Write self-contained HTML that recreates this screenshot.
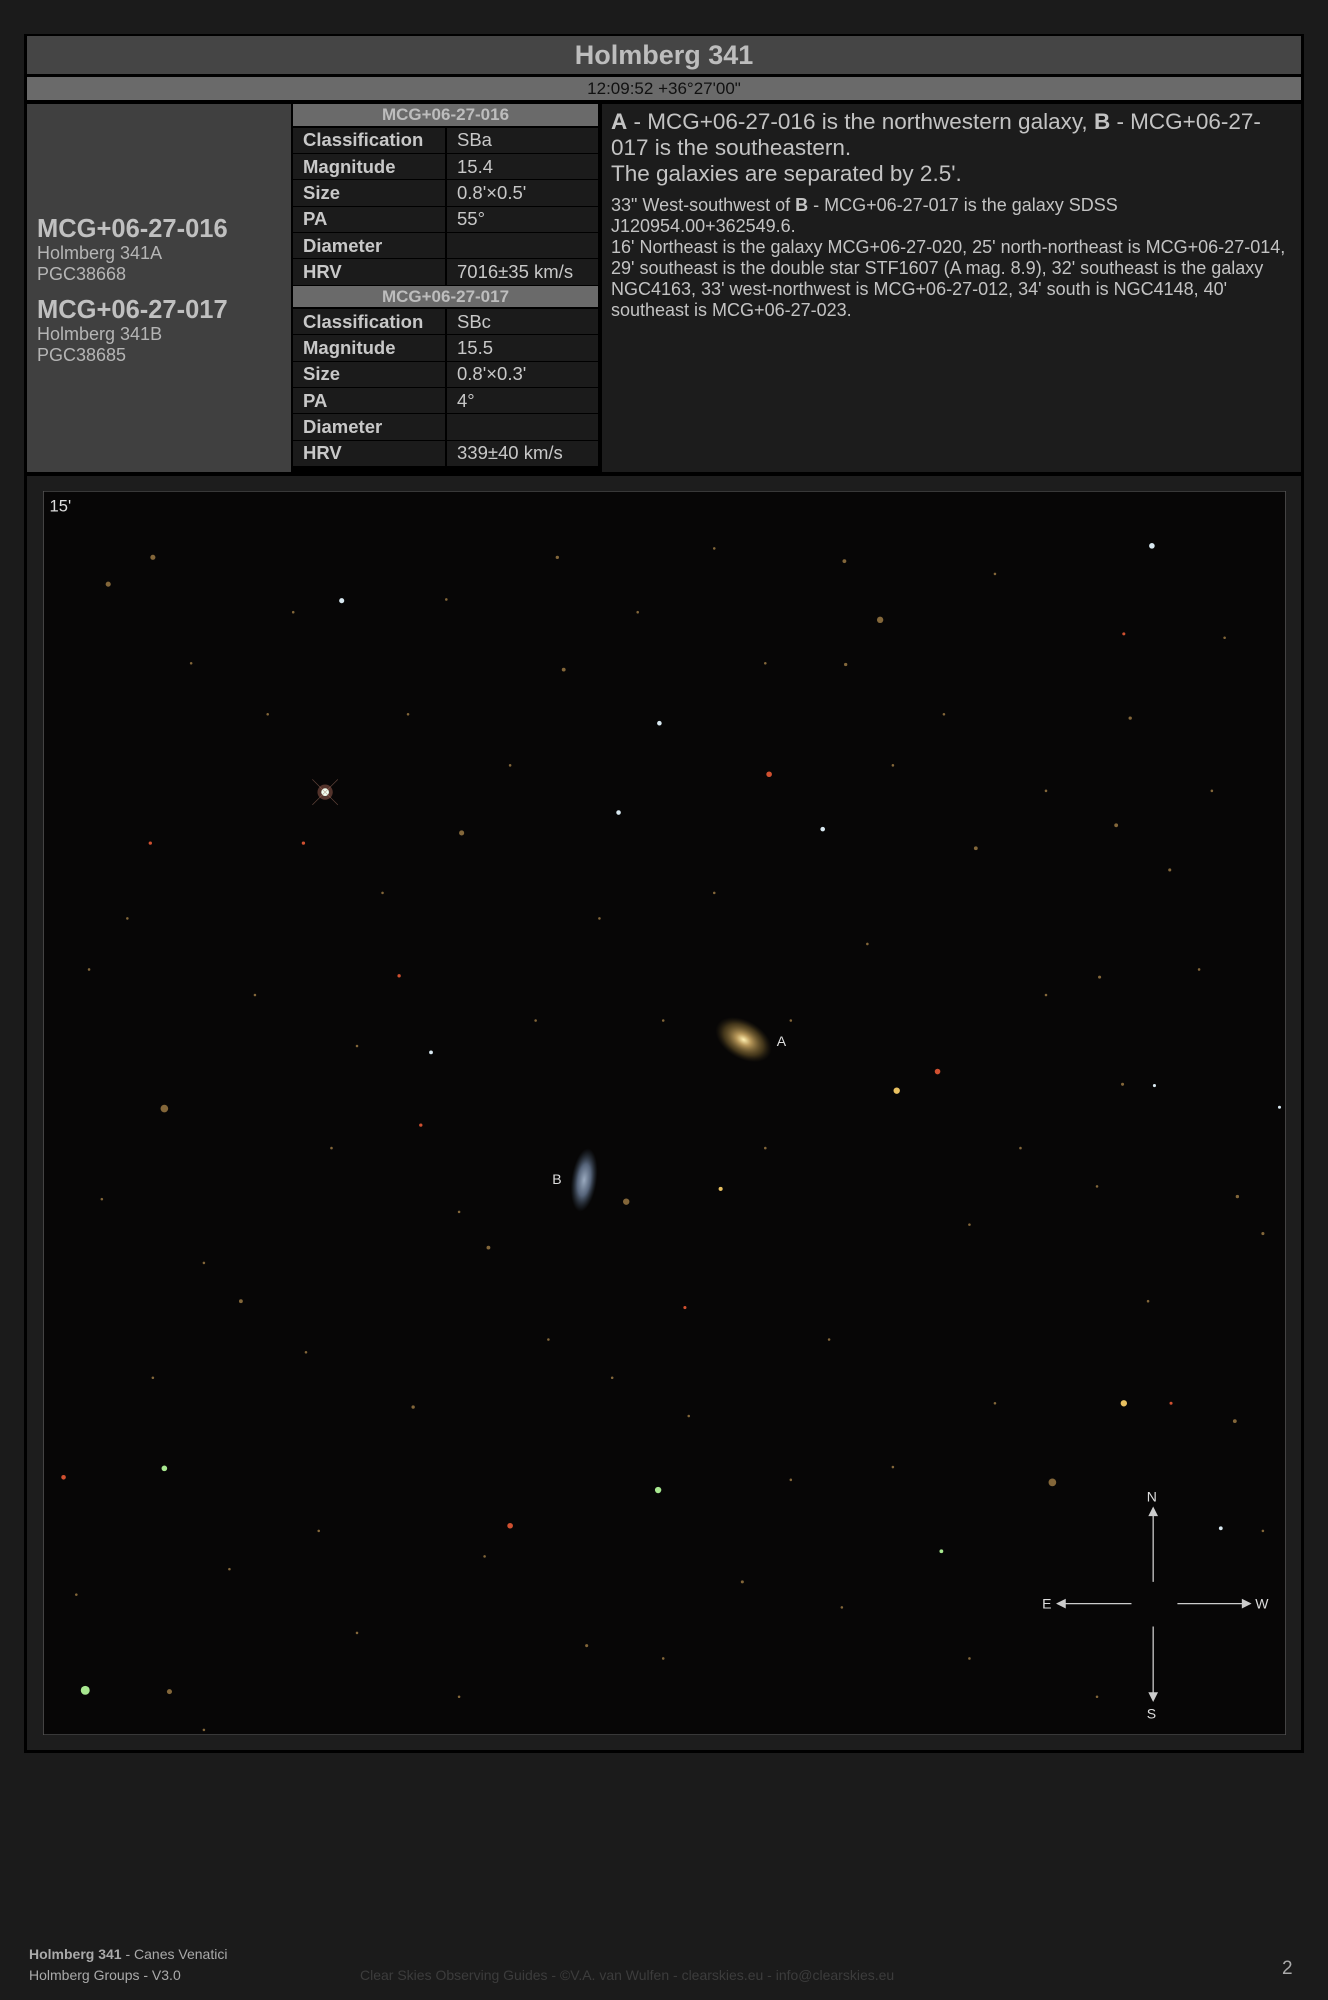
<!DOCTYPE html>
<html><head><meta charset="utf-8"><style>
*{margin:0;padding:0;box-sizing:border-box}
body{width:1328px;height:2000px;background:#1b1b1b;font-family:"Liberation Sans",sans-serif;position:relative;overflow:hidden}
.abs{position:absolute}
#outer{left:24px;top:34px;width:1280px;height:1719px;background:#000}
#title{left:27px;top:36px;width:1274px;height:38px;background:#454545;color:#bdbdbd;font-weight:bold;font-size:27px;text-align:center;line-height:38px}
#coord{left:27px;top:77px;width:1274px;height:23px;background:#6a6a6a;color:#111;font-size:17px;text-align:center;line-height:24px}
#left{left:27px;top:104px;width:264px;height:368px;background:#404040;color:#b5b5b5}
#left .n{font-weight:bold;font-size:25.5px;color:#c0c0c0;padding-left:10px;line-height:28px}
#left .s{font-size:18px;padding-left:10px;line-height:21px}
table{position:absolute;left:293px;width:305px;border-collapse:collapse;font-size:18.5px}
td{height:26.4px;background:#1b1b1b;color:#c8c8c8;border-bottom:1px solid #000;padding-left:10px}
td.k{font-weight:bold;width:153px;border-right:2px solid #000}
th{height:23px;background:#6a6a6a;color:#bdbdbd;font-size:17px;font-weight:bold;border-bottom:2px solid #000}
#txt{left:602px;top:104px;width:699px;height:368px;background:#1c1c1c}
#imgbg{left:27px;top:476px;width:1274px;height:1274px;background:#1d1d1d}
.f{font-size:14px;color:#aaa}
</style></head><body>
<div id="outer" class="abs"></div>
<div id="title" class="abs">Holmberg 341</div>
<div id="coord" class="abs">12:09:52 +36°27'00"</div>
<div id="left" class="abs"><div style="height:111px"></div>
<div class="n">MCG+06-27-016</div><div class="s">Holmberg 341A</div><div class="s">PGC38668</div>
<div style="height:11px"></div>
<div class="n">MCG+06-27-017</div><div class="s">Holmberg 341B</div><div class="s">PGC38685</div></div>
<table style="top:104px">
<tr><th colspan="2">MCG+06-27-016</th></tr>
<tr><td class="k">Classification</td><td>SBa</td></tr>
<tr><td class="k">Magnitude</td><td>15.4</td></tr>
<tr><td class="k">Size</td><td>0.8'×0.5'</td></tr>
<tr><td class="k">PA</td><td>55°</td></tr>
<tr><td class="k">Diameter</td><td></td></tr>
<tr><td class="k">HRV</td><td>7016±35 km/s</td></tr>
<tr><th colspan="2">MCG+06-27-017</th></tr>
<tr><td class="k">Classification</td><td>SBc</td></tr>
<tr><td class="k">Magnitude</td><td>15.5</td></tr>
<tr><td class="k">Size</td><td>0.8'×0.3'</td></tr>
<tr><td class="k">PA</td><td>4°</td></tr>
<tr><td class="k">Diameter</td><td></td></tr>
<tr><td class="k">HRV</td><td>339±40 km/s</td></tr>
</table>
<div id="txt" class="abs"></div>
<div class="abs" style="left:611px;top:109px;width:676px;color:#c3c3c3">
<div style="font-size:22.5px;line-height:26px"><b>A</b> - MCG+06-27-016 is the northwestern galaxy, <b>B</b> - MCG+06-27-017 is the southeastern.<br>The galaxies are separated by 2.5'.</div>
<div style="font-size:18px;line-height:21px;margin-top:8px">33" West-southwest of <b>B</b> - MCG+06-27-017 is the galaxy SDSS J120954.00+362549.6.<br>16' Northeast is the galaxy MCG+06-27-020, 25' north-northeast is MCG+06-27-014, 29' southeast is the double star STF1607 (A mag. 8.9), 32' southeast is the galaxy NGC4163, 33' west-northwest is MCG+06-27-012, 34' south is NGC4148, 40' southeast is MCG+06-27-023.</div></div>
<div id="imgbg" class="abs"></div>
<svg class="abs" style="left:43px;top:491px" width="1243" height="1244" viewBox="34 385 974 975">
<defs><radialGradient id="ga"><stop offset="0" stop-color="#fff0b0"/><stop offset="0.25" stop-color="#b8985a"/><stop offset="0.7" stop-color="#6b5628" stop-opacity="0.6"/><stop offset="1" stop-color="#3b3018" stop-opacity="0"/></radialGradient>
<radialGradient id="gb"><stop offset="0" stop-color="#9aaabf"/><stop offset="0.5" stop-color="#56647a"/><stop offset="1" stop-color="#33404f" stop-opacity="0"/></radialGradient></defs>
<rect x="34" y="385" width="974" height="975" fill="#070606" stroke="#555" stroke-width="1"/>
<g fill="#b89050" opacity="0.7">
<circle cx="120" cy="437" r="2"/><circle cx="442" cy="525" r="1.5"/><circle cx="663" cy="521" r="1.3"/><circle cx="886" cy="563" r="1.3"/><circle cx="875" cy="647" r="1.5"/><circle cx="917" cy="682" r="1.2"/><circle cx="862" cy="766" r="1.2"/><circle cx="970" cy="938" r="1.3"/><circle cx="990" cy="967" r="1.2"/><circle cx="362" cy="653" r="2"/><circle cx="491" cy="942" r="2.5"/><circle cx="383" cy="978" r="1.5"/><circle cx="189" cy="1020" r="1.5"/><circle cx="324" cy="1103" r="1.3"/><circle cx="968" cy="1114" r="1.5"/><circle cx="160" cy="1356" r="1"/><circle cx="133" cy="1326" r="2"/><circle cx="437" cy="437" r="1.3"/><circle cx="85" cy="458" r="2"/><circle cx="765" cy="665" r="1.5"/><circle cx="582" cy="1240" r="1.2"/><circle cx="690" cy="486" r="2.5"/><circle cx="662" cy="440" r="1.5"/><circle cx="129" cy="869" r="3"/><circle cx="825" cy="1162" r="3"/><circle cx="300" cy="700" r="1"/><circle cx="420" cy="800" r="1"/><circle cx="210" cy="560" r="1"/><circle cx="560" cy="700" r="1"/><circle cx="700" cy="600" r="1"/><circle cx="800" cy="900" r="1"/><circle cx="650" cy="1050" r="1"/><circle cx="250" cy="1200" r="1"/><circle cx="460" cy="1290" r="1.2"/><circle cx="760" cy="1300" r="1"/><circle cx="900" cy="1020" r="1"/><circle cx="350" cy="470" r="1"/><circle cx="560" cy="430" r="1"/><circle cx="780" cy="450" r="1"/><circle cx="960" cy="500" r="1"/><circle cx="70" cy="760" r="1"/><circle cx="160" cy="990" r="1"/><circle cx="540" cy="1110" r="1"/><circle cx="700" cy="1150" r="1"/><circle cx="620" cy="800" r="1"/><circle cx="880" cy="850" r="1.2"/><circle cx="430" cy="1050" r="1"/><circle cx="280" cy="1280" r="1"/><circle cx="860" cy="1330" r="1"/><circle cx="990" cy="1200" r="1"/>
<circle cx="150" cy="520" r="1"/><circle cx="230" cy="480" r="1"/><circle cx="320" cy="560" r="1"/><circle cx="400" cy="600" r="1"/><circle cx="500" cy="480" r="1"/><circle cx="600" cy="520" r="1"/><circle cx="740" cy="560" r="1"/><circle cx="820" cy="620" r="1"/><circle cx="950" cy="620" r="1"/><circle cx="100" cy="720" r="1"/><circle cx="200" cy="780" r="1"/><circle cx="280" cy="820" r="1"/><circle cx="470" cy="720" r="1"/><circle cx="520" cy="800" r="1"/><circle cx="680" cy="740" r="1"/><circle cx="820" cy="780" r="1"/><circle cx="940" cy="760" r="1"/><circle cx="80" cy="940" r="1"/><circle cx="260" cy="900" r="1"/><circle cx="360" cy="950" r="1"/><circle cx="600" cy="900" r="1"/><circle cx="760" cy="960" r="1"/><circle cx="860" cy="930" r="1"/><circle cx="120" cy="1080" r="1"/><circle cx="240" cy="1060" r="1"/><circle cx="480" cy="1080" r="1"/><circle cx="620" cy="1160" r="1"/><circle cx="780" cy="1100" r="1"/><circle cx="60" cy="1250" r="1"/><circle cx="180" cy="1230" r="1"/><circle cx="380" cy="1220" r="1"/><circle cx="520" cy="1300" r="1"/><circle cx="660" cy="1260" r="1"/><circle cx="360" cy="1330" r="1"/></g>
<g fill="#d05030"><circle cx="603" cy="607" r="2.2"/><circle cx="735" cy="840" r="2.2"/><circle cx="330" cy="882" r="1.3"/><circle cx="313" cy="765" r="1.3"/><circle cx="118" cy="661" r="1.3"/><circle cx="238" cy="661" r="1.3"/><circle cx="400" cy="1196" r="2.2"/><circle cx="50" cy="1158" r="1.8"/><circle cx="537" cy="1025" r="1.2"/><circle cx="881" cy="497" r="1.2"/><circle cx="918" cy="1100" r="1.2"/></g>
<g fill="#e8c060"><circle cx="703" cy="855" r="2.5"/><circle cx="881" cy="1100" r="2.5"/><circle cx="565" cy="932" r="1.6"/></g>
<g fill="#d8e8f0"><circle cx="268" cy="471" r="2"/><circle cx="903" cy="428" r="2.2"/><circle cx="517" cy="567" r="1.8"/><circle cx="485" cy="637" r="1.8"/><circle cx="645" cy="650" r="1.8"/><circle cx="338" cy="825" r="1.5"/><circle cx="905" cy="851" r="1.2"/><circle cx="957" cy="1198" r="1.5"/><circle cx="1003" cy="868" r="1.2"/></g>
<g fill="#a8e890"><circle cx="129" cy="1151" r="2.2"/><circle cx="516" cy="1168" r="2.5"/><circle cx="67" cy="1325" r="3.5"/><circle cx="738" cy="1216" r="1.5"/></g>
<circle cx="255" cy="621" r="6" fill="#a06050" opacity="0.5"/><circle cx="255" cy="621" r="3" fill="#f0fff0"/>
<path d="M245 611L265 631M265 611L245 631" stroke="#a07060" stroke-width="0.5" opacity="0.6"/>
<ellipse cx="583" cy="815" rx="24" ry="15" fill="url(#ga)" transform="rotate(30 583 815)"/>
<ellipse cx="458" cy="925" rx="10" ry="25" fill="url(#gb)" transform="rotate(8 458 925)"/>
<g fill="#ddd" font-family="Liberation Sans,sans-serif" font-size="11"><text x="609" y="820">A</text><text x="433" y="928">B</text><text x="39" y="401" font-size="13">15'</text>
<text x="899" y="1177">N</text><text x="899" y="1347">S</text><text x="817" y="1261">E</text><text x="984" y="1261">W</text></g>
<g stroke="#ccc" stroke-width="1" fill="#ccc"><path d="M904 1240V1187M887 1257H834M923 1257H975M904 1275V1328" fill="none"/>
<path d="M904 1182l-3 6h6zM904 1333l-3-6h6zM829 1257l6-3v6zM980 1257l-6-3v6z"/></g>
</svg>
<div class="abs f" style="left:29px;top:1946px"><b>Holmberg 341</b> - Canes Venatici</div>
<div class="abs f" style="left:29px;top:1967px">Holmberg Groups - V3.0</div>
<div class="abs f" style="left:360px;top:1967px;color:#3c3c3c">Clear Skies Observing Guides - ©V.A. van Wulfen - clearskies.eu - info@clearskies.eu</div>
<div class="abs" style="left:1282px;top:1958px;color:#aaa;font-size:19px">2</div>
</body></html>
